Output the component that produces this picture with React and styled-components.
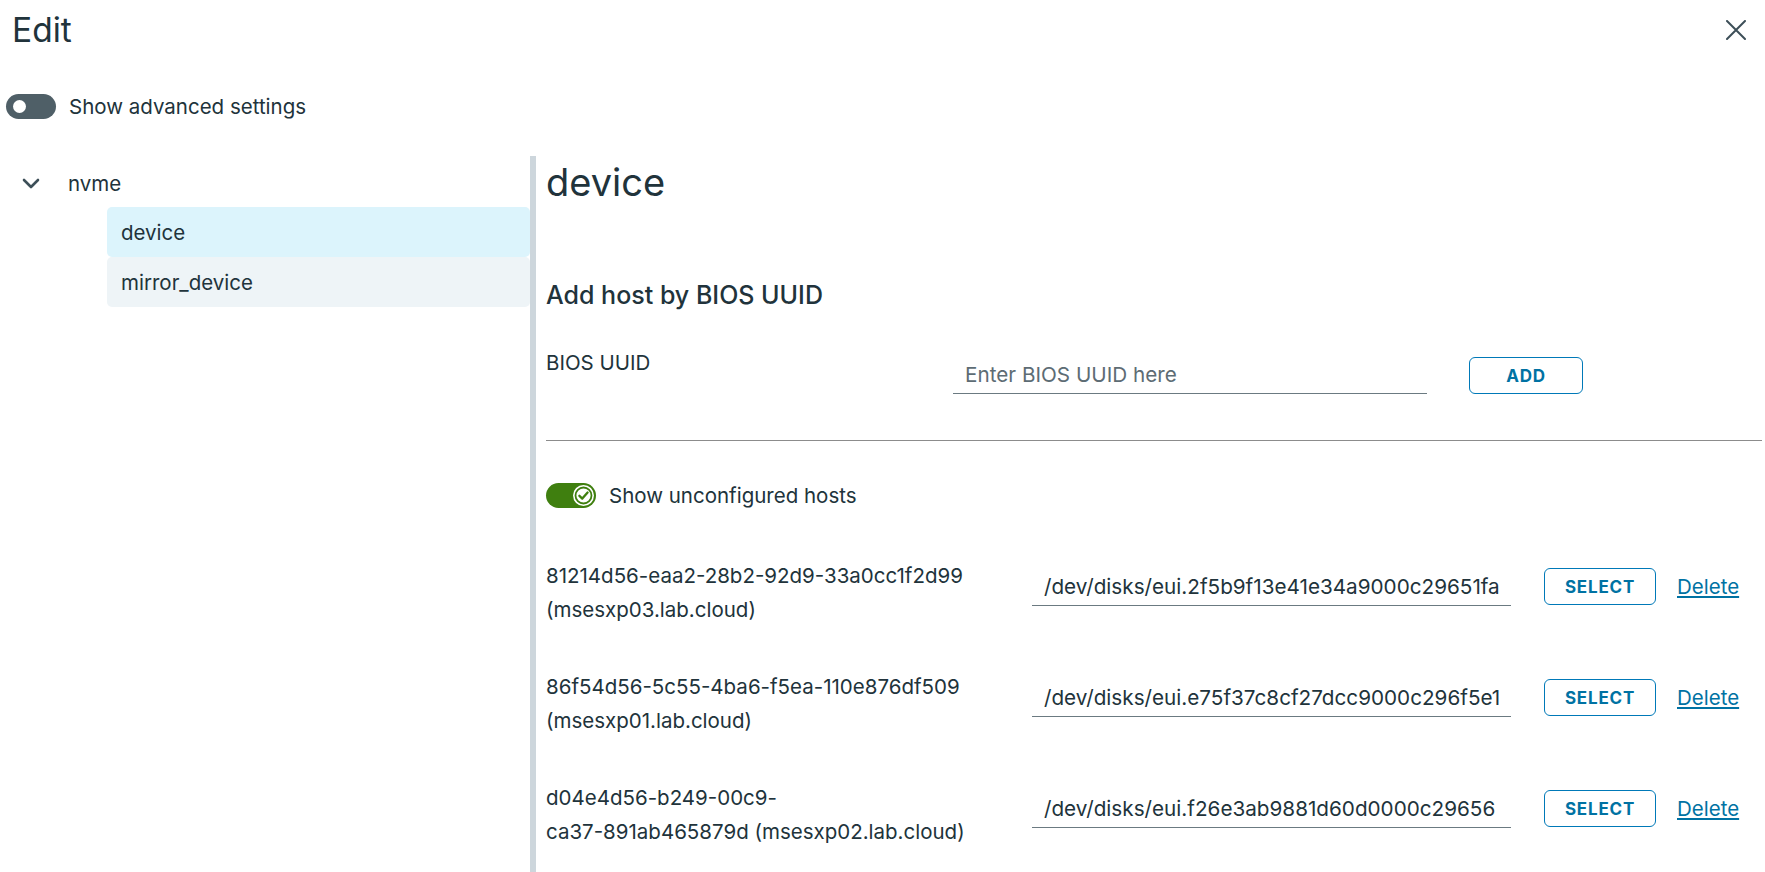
import React, { useState } from 'react';
import styled, { createGlobalStyle } from 'styled-components';

const GlobalStyle = createGlobalStyle`
html, body {
    margin: 0;
    padding: 0;
    background: #ffffff;
}
body {
    font-family: Inter, 'Open Sans', sans-serif;
    color: #21333b;
    font-size: 20.5px;
}
* { box-sizing: border-box; }
`

const Page = styled.div`
width: 1765px;
height: 872px;
overflow: hidden;
display: flex;
flex-direction: column;
`

const Header = styled.div`
display: flex;
align-items: center;
justify-content: space-between;
height: 60px;
padding: 0 18px 0 12px;
`

const Title = styled.h1`
margin: 0;
font-size: 33.5px;
font-weight: 400;
color: #21333b;
`

const CloseButton = styled.button`
border: none;
background: none;
padding: 0;
width: 22px;
height: 22px;
display: flex;
align-items: center;
justify-content: center;
cursor: pointer;
`

const ToggleRow = styled.label`
display: flex;
align-items: center;
gap: 13px;
padding-left: ${props => props.indent || 0}px;
margin: ${props => props.margin || '0'};
cursor: pointer;
font-size: 20.5px;
`

const Track = styled.span`
position: relative;
flex: none;
display: inline-block;
width: 50px;
height: 25px;
border-radius: 13px;
background: ${props => props.on ? '#3f7f0f' : '#4f5f67'};
`

const Knob = styled.span`
position: absolute;
top: ${props => props.on ? 2 : 6}px;
left: ${props => props.on ? 27 : 7}px;
width: ${props => props.on ? 21 : 13}px;
height: ${props => props.on ? 21 : 13}px;
border-radius: 50%;
background: #ffffff;
display: flex;
align-items: center;
justify-content: center;
`

const Body = styled.div`
flex: 1;
display: grid;
grid-template-columns: 530px 1fr;
margin-top: 37px;
min-height: 0;
`

const Tree = styled.div`
display: flex;
flex-direction: column;
padding-top: 12px;
`

const ParentNode = styled.div`
display: flex;
align-items: center;
height: 30px;
padding-left: 22px;
gap: 28px;
margin-bottom: 9px;
`

const ChildNode = styled.div`
margin-left: 107px;
height: 50px;
display: flex;
align-items: center;
padding-left: 14px;
border-radius: 5px;
background: ${props => props.selected ? '#dcf4fc' : '#eef4f7'};
`

const Content = styled.div`
border-left: 6px solid #cdd6dc;
padding: 4px 3px 0 10px;
display: flex;
flex-direction: column;
`

const Heading = styled.h2`
margin: 0;
font-size: 38px;
font-weight: 400;
line-height: 44px;
`

const SubHeading = styled.h3`
margin: 76px 0 0;
font-size: 25px;
font-weight: 500;
line-height: 30px;
`

const FormRow = styled.div`
display: grid;
grid-template-columns: 365px 474px 114px;
column-gap: 42px;
margin-top: 46px;
align-items: start;
`

const Label = styled.div`
line-height: 24px;
margin-top: -5px;
`

const LineInput = styled.input`
width: 100%;
height: 38px;
border: none;
border-bottom: 1px solid #6b7a81;
padding: 0 12px;
font-family: inherit;
font-size: 20.7px;
color: #21333b;
background: transparent;
outline: none;
margin-top: ${props => props.offset || 0}px;
&::placeholder {
    color: #5d6c74;
}
`

const OutlineButton = styled.button`
flex: none;
width: ${props => props.width || 114}px;
height: 37px;
border: 1px solid #0079b8;
border-radius: 6px;
background: #ffffff;
color: #0072a3;
font-family: inherit;
font-size: 17px;
font-weight: 700;
letter-spacing: 0.8px;
cursor: pointer;
margin-top: ${props => props.offset || 0}px;
`

const Divider = styled.hr`
margin: 46px 0 0;
border: none;
border-top: 1px solid #8c8c8c;
`

const HostList = styled.div`
display: flex;
flex-direction: column;
gap: 40px;
margin-top: 48px;
`

const HostRow = styled.div`
display: flex;
align-items: flex-start;
`

const HostName = styled.div`
flex: none;
width: 425px;
padding-top: 3px;
line-height: 34px;
`

const IdTail = styled.span`
white-space: nowrap;
`

const InputCell = styled.div`
flex: none;
margin-left: 61px;
width: 479px;
`

const ButtonCell = styled.div`
flex: none;
margin-left: 33px;
margin-top: 12px;
display: flex;
align-items: center;
height: 37px;
gap: 21px;
`

const DeleteLink = styled.a`
color: #0072a3;
text-decoration: underline;
cursor: pointer;
`

const hosts = [
    { id: '81214d56-eaa2-28b2-92d9-33a0cc1f2d99', name: 'msesxp03.lab.cloud', disk: '/dev/disks/eui.2f5b9f13e41e34a9000c29651fa' },
    { id: '86f54d56-5c55-4ba6-f5ea-110e876df509', name: 'msesxp01.lab.cloud', disk: '/dev/disks/eui.e75f37c8cf27dcc9000c296f5e1' },
    { id: 'd04e4d56-b249-00c9-ca37-891ab465879d', name: 'msesxp02.lab.cloud', disk: '/dev/disks/eui.f26e3ab9881d60d0000c29656' },
]

// keep the last two uuid groups together, like the original wraps them
function splitId(id){
    const parts = id.split('-');
    return [parts.slice(0, 3).join('-') + '-', parts.slice(3).join('-')];
}

function CloseIcon(){
    return (
        <svg width="20" height="20" viewBox="0 0 20 20">
            <path d="M1 1 L19 19 M19 1 L1 19" stroke="#3d4f58" strokeWidth="2" strokeLinecap="round" />
        </svg>
    )
}

function Chevron(){
    return (
        <svg width="18" height="11" viewBox="0 0 18 11">
            <path d="M2 2 L9 9 L16 2" stroke="#3d4f58" strokeWidth="2.6" fill="none" strokeLinecap="round" strokeLinejoin="round" />
        </svg>
    )
}

function Check(){
    return (
        <svg width="19" height="19" viewBox="0 0 19 19">
            <circle cx="9.5" cy="9.5" r="8" fill="none" stroke="#3f7f0f" strokeWidth="1.8" />
            <path d="M5.4 9.8 L8.3 12.6 L13.6 6.5" stroke="#3f7f0f" strokeWidth="2.3" fill="none" strokeLinecap="round" strokeLinejoin="round" />
        </svg>
    )
}

function Toggle({ on }){
    return (
        <Track on={on ? 1 : 0}>
            <Knob on={on ? 1 : 0}>{on && <Check />}</Knob>
        </Track>
    )
}

export default function App(){
    const [ advanced, setAdvanced ] = useState(false);
    const [ unconfigured, setUnconfigured ] = useState(true);

    return (
        <Page>
            <GlobalStyle />
            <Header>
                <Title>Edit</Title>
                <CloseButton><CloseIcon /></CloseButton>
            </Header>
            <ToggleRow indent={6} margin="34px 0 0" onClick={() => setAdvanced(!advanced)}>
                <Toggle on={advanced} />
                Show advanced settings
            </ToggleRow>
            <Body>
                <Tree>
                    <ParentNode>
                        <Chevron />
                        nvme
                    </ParentNode>
                    <ChildNode selected>device</ChildNode>
                    <ChildNode>mirror_device</ChildNode>
                </Tree>
                <Content>
                    <Heading>device</Heading>
                    <SubHeading>Add host by BIOS UUID</SubHeading>
                    <FormRow>
                        <Label>BIOS UUID</Label>
                        <LineInput placeholder="Enter BIOS UUID here" />
                        <OutlineButton offset={1}>ADD</OutlineButton>
                    </FormRow>
                    <Divider />
                    <ToggleRow margin="42px 0 0" onClick={() => setUnconfigured(!unconfigured)}>
                        <Toggle on={unconfigured} />
                        Show unconfigured hosts
                    </ToggleRow>
                    <HostList>
                        {hosts.map(h => {
                            const [head, tail] = splitId(h.id);
                            return (
                                <HostRow key={h.id}>
                                    <HostName>{head}<IdTail>{tail}</IdTail> ({h.name})</HostName>
                                    <InputCell>
                                        <LineInput defaultValue={h.disk} offset={12} />
                                    </InputCell>
                                    <ButtonCell>
                                        <OutlineButton width={112}>SELECT</OutlineButton>
                                        <DeleteLink>Delete</DeleteLink>
                                    </ButtonCell>
                                </HostRow>
                            )
                        })}
                    </HostList>
                </Content>
            </Body>
        </Page>
    )
}
